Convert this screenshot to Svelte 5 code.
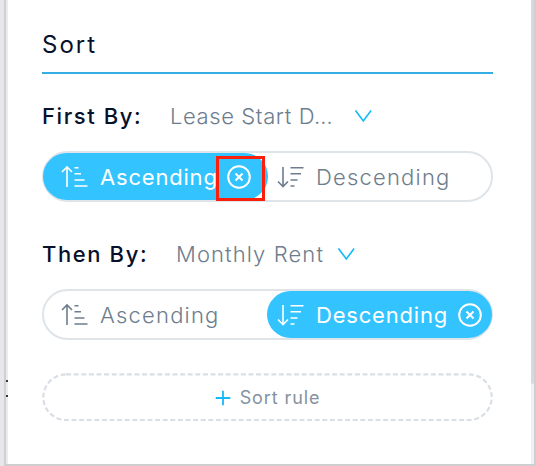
<script lang="ts">
    let rules = $state([
        { label: "First By:", field: "Lease Start D…", order: "asc", marked: true, id: "first" },
        { label: "Then By:", field: "Monthly Rent", order: "desc", marked: false, id: "then" }
    ]);
</script>

{#snippet sortIcon(dir: string)}
    <svg class="sort-icon" width="28" height="24" viewBox="0 0 28 24">
        {#if dir === "asc"}
            <path d="M6 22V3M1 7L6 2L11 7" />
            <path class="bars" d="M13.5 2.7H17.5M13.5 8.7H20M13.5 15H23.5M13.5 21H26.5" />
        {:else}
            <path d="M6 2V21M1 16.5L6 21.5L11 16.5" />
            <path class="bars" d="M13.5 2.7H26.5M13.5 8.7H24M13.5 15H20.5M13.5 21H17.5" />
        {/if}
    </svg>
{/snippet}

{#snippet clearIcon()}
    <svg width="24" height="24" viewBox="0 0 24 24">
        <circle cx="12" cy="12" r="10.8" />
        <path class="cross" d="M8.5 8.5L15.5 15.5M15.5 8.5L8.5 15.5" />
    </svg>
{/snippet}

<div class="window">
    <div class="gutter"><span></span><span></span></div>
    <div class="panel">
        <h2>Sort</h2>

        {#each rules as rule}
            <div class="rule-head {rule.id}">
                <span class="label">{rule.label}</span>
                <span class="field">{rule.field}</span>
                <svg width="18" height="14" viewBox="0 0 18 14">
                    <path d="M.5 1.5L8.3 12L16.1 1.5" />
                </svg>
            </div>
            <div class="toggle">
                <button class="option" class:active={rule.order === "asc"} onclick={() => (rule.order = "asc")}>
                    {@render sortIcon("asc")}
                    <span class="name asc">Ascending</span>
                    {#if rule.order === "asc"}
                        <span class="clear" class:marked={rule.marked}>{@render clearIcon()}</span>
                    {/if}
                </button>
                <button class="option desc" class:active={rule.order === "desc"} onclick={() => (rule.order = "desc")}>
                    {@render sortIcon("desc")}
                    <span class="name">Descending</span>
                    {#if rule.order === "desc"}
                        <span class="clear">{@render clearIcon()}</span>
                    {/if}
                </button>
            </div>
        {/each}

        <button class="add">
            <svg class="outline" width="451" height="49" viewBox="0 0 451 49">
                <rect x="1.3" y="1.4" width="448.4" height="45.6" rx="22.8" />
            </svg>
            <svg class="plus" width="16" height="16" viewBox="0 0 16 16">
                <path d="M8 .7V15.3M.7 8H15.3" />
            </svg>
            <span>Sort rule</span>
        </button>
    </div>
    <div class="scrollbar"><div class="thumb"></div></div>
</div>

<style>
    :global(body) {
        background: #e5e7ea;
    }

    .window {
        display: flex;
        box-sizing: border-box;
        width: 532px;
        height: 466px;
        margin-left: 4px;
        border: solid #cfcfd1;
        border-width: 0 2px 2px 2px;
        background: #fff;
        font-family: Inter, "Liberation Sans", sans-serif;
        color: #6d7d8d;
    }

    .gutter {
        width: 2px;
        background: #ebebec;
        padding-top: 380px;
        box-sizing: border-box;
    }

    .gutter span {
        display: block;
        height: 2px;
        margin-bottom: 13px;
        background: #33373d;
    }

    .panel {
        width: 451px;
        padding: 0 38px 0 34px;
    }

    h2 {
        box-sizing: border-box;
        height: 74px;
        margin: 0;
        padding: 30px 0 0;
        border-bottom: 2px solid #35afe3;
        font-size: 24px;
        line-height: 30px;
        font-weight: 400;
        letter-spacing: 2px;
        color: #07112b;
    }

    svg {
        flex: none;
        fill: none;
        stroke: currentColor;
        stroke-width: 1.6;
    }

    .bars {
        stroke-width: 1.5;
    }

    .rule-head {
        display: flex;
        align-items: center;
        height: 28px;
        margin: 28px 0 21px;
        font-size: 22px;
        line-height: 28px;
        white-space: nowrap;
    }

    .rule-head.then {
        margin-top: 38px;
    }

    .rule-head svg {
        stroke: #12b9fb;
    }

    .label {
        width: 128px;
        font-weight: 500;
        letter-spacing: 1.6px;
        color: #07112b;
    }

    .then .label {
        width: 134px;
    }

    .field {
        width: 185px;
        font-weight: 300;
        letter-spacing: .6px;
    }

    .then .field {
        width: 162px;
        letter-spacing: 1.1px;
    }

    .toggle {
        display: flex;
        box-sizing: border-box;
        height: 51px;
        border: 2px solid #dfe4e9;
        border-radius: 26px;
    }

    .option {
        display: flex;
        align-items: center;
        flex: none;
        box-sizing: border-box;
        width: 225px;
        margin: 0 0 0 -1px;
        padding: 0 0 0 18px;
        border: 0;
        border-radius: 24px;
        background: none;
        font: 300 22px/28px Inter, "Liberation Sans", sans-serif;
        color: #6d7d8d;
    }

    .option.desc {
        padding-left: 10px;
    }

    .option.active {
        background: #33c3ff;
        color: #fff;
    }

    .name {
        width: 142px;
        margin-left: 11px;
        text-align: left;
        letter-spacing: 1.2px;
    }

    .name.asc {
        width: 116px;
    }

    .active .name {
        font-weight: 400;
        letter-spacing: .8px;
    }

    .clear {
        display: flex;
        align-items: center;
        justify-content: center;
        box-sizing: border-box;
        width: 24px;
        height: 45px;
    }

    .clear svg {
        stroke-width: 2;
    }

    .clear.marked {
        flex: none;
        width: 49px;
        margin-top: 4px;
        border: 3px solid #fa200b;
    }

    .marked svg {
        position: relative;
        top: -2px;
        left: -2px;
    }

    .add {
        display: flex;
        position: relative;
        align-items: center;
        justify-content: center;
        width: 451px;
        height: 49px;
        margin: 33px 0 0;
        padding: 0;
        border: 0;
        background: none;
        font: 400 18px/24px Inter, "Liberation Sans", sans-serif;
        letter-spacing: .9px;
        color: #8492a0;
    }

    .outline {
        position: absolute;
        top: 0;
        left: 0;
        stroke: #d9dfe5;
        stroke-width: 2.2;
        stroke-dasharray: 5 2.6;
    }

    .plus {
        margin-right: 9px;
        stroke: #12b9fb;
        stroke-width: 1.8;
    }

    .scrollbar {
        width: 3px;
        background: #edf1f4;
    }

    .thumb {
        height: 384px;
        background: #d4dae0;
        border-radius: 0 0 2px 2px;
    }
</style>
